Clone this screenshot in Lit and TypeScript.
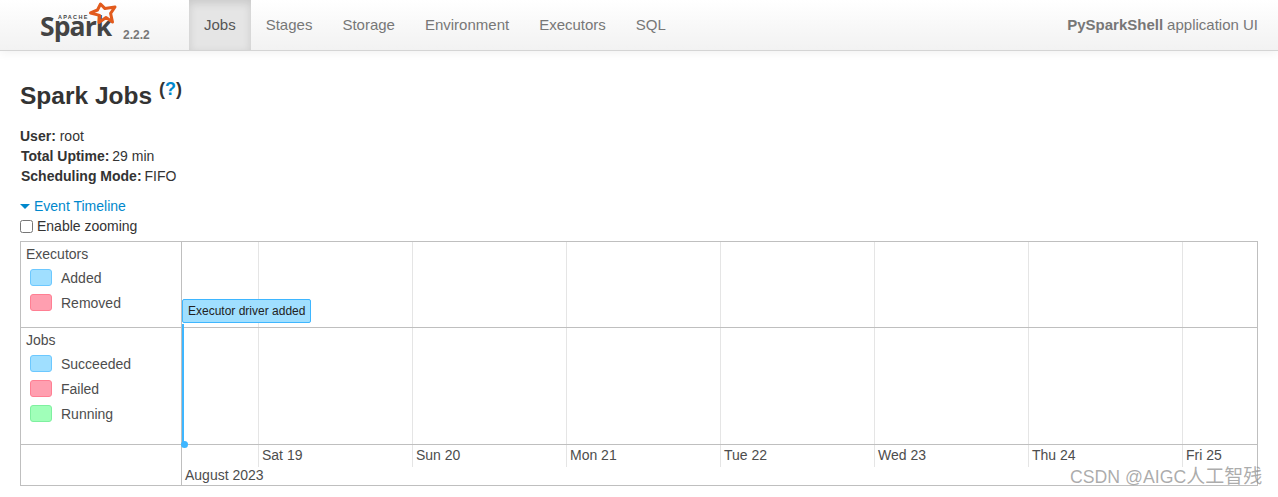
import { LitElement, html, css, svg } from "lit";
import { customElement } from "lit/decorators.js";

const DAYS: [string, number][] = [
  ["Sat 19", 258], ["Sun 20", 412], ["Mon 21", 566], ["Tue 22", 720],
  ["Wed 23", 874], ["Thu 24", 1028], ["Fri 25", 1182],
];
const ORIGIN = 182;

@customElement("app-root")
export class AppRoot extends LitElement {
  static styles = css`
    :host { display: block; width: 1278px; height: 497px; overflow: hidden; position: relative; background: #fff;
      font-family: "Liberation Sans", Arial, sans-serif; font-size: 14px; line-height: 20px; color: #333; }
    .nav { height: 51px; box-sizing: border-box; display: flex; align-items: stretch;
      background: linear-gradient(to bottom, #ffffff, #f2f2f2); border-bottom: 1px solid #d4d4d4;
      box-shadow: 0 1px 10px rgba(0,0,0,.07); }
    .brand { width: 189px; flex: none; position: relative; }
    .star { position: absolute; left: 87px; top: 0; width: 31px; height: 28px; }
    .apache { position: absolute; left: 58px; top: 13px; font-family: "Liberation Sans", sans-serif; font-weight: 700; font-size: 5.5px; line-height: 8px; letter-spacing: 1.3px; color: #444; }
    .spark { position: absolute; left: 40px; top: 20px; font-family: "Open Sans", sans-serif; font-weight: 700; font-size: 26.5px; line-height: 12px; letter-spacing: -.9px; color: #444; }
    .ver { position: absolute; left: 123px; top: 25px; font-size: 12px; line-height: 20px; font-weight: 700; color: #777; }
    .tab { display: flex; align-items: center; padding: 0 15px; font-size: 15px; color: #777; height: 50px; }
    .tab.active { color: #555; background: #e5e5e5; box-shadow: inset 0 3px 8px rgba(0,0,0,.125); }
    .app { margin-left: auto; padding-right: 20px; display: flex; align-items: center; font-size: 15px; color: #777; height: 50px; }
    .app b { margin-right: 4px; }
    .content { padding: 0 20px; }
    h3 { margin: 0; padding-top: 25px; font-size: 24.5px; line-height: 40px; font-weight: 700; color: #333; display: flex; height: 40px; }
    h3 sup { font-size: 18px; line-height: 18px; margin-left: 7px; margin-top: 4px; font-weight: 700; color: #333; }
    h3 sup a { color: #0088cc; }
    .meta { margin-top: 10px; }
    .meta div { height: 20px; }
    .meta div:not(:first-child) { padding-left: 1px; }
    .meta div:not(:first-child) b { margin-right: -1px; }
    .toggle { margin-top: 10px; color: #0088cc; display: flex; align-items: center; height: 20px; }
    .caret { width: 0; height: 0; border-left: 5px solid transparent; border-right: 5px solid transparent; border-top: 5px solid #0088cc; margin-right: 4px; }
    .zoom { display: flex; align-items: center; height: 20px; }
    .zoom input { width: 13px; height: 13px; margin: 1px 4px 0 0; }
    .timeline { margin-top: 5px; width: 1238px; height: 245px; box-sizing: border-box; border: 1px solid #bfbfbf; display: grid;
      grid-template-columns: 161px 1fr; grid-template-rows: 86px 117px 1fr; color: #4d4d4d; }
    .label { padding: 2px 0 0 5px; border-right: 1px solid #bfbfbf; border-bottom: 1px solid #bfbfbf; }
    .group { height: 20px; }
    .legend { display: flex; align-items: center; height: 25px; padding-left: 4px; }
    .group + .legend { margin-top: 1px; }
    .swatch { width: 20px; height: 15px; border-radius: 3px; border: 1px solid; margin-right: 9px; }
    .blue { background: #a0dfff; border-color: #6cc8ff; }
    .red { background: #ff9fb0; border-color: #ff7f93; }
    .green { background: #a0ffb9; border-color: #7ff0a0; }
    .panel { position: relative; border-bottom: 1px solid #bfbfbf; }
    .axis-label { border-right: 1px solid #bfbfbf; }
    .axis { position: relative; }
    .grid { position: absolute; top: 0; bottom: 0; width: 1px; background: #e5e5e5; }
    .tick { position: absolute; top: 0; height: 22px; width: 1px; background: #e5e5e5; }
    .day { position: absolute; top: 0; line-height: 20px; padding-left: 4px; }
    .month { position: absolute; left: 3px; top: 20px; line-height: 20px; }
    .box { position: absolute; left: 0; top: 57px; height: 24px; box-sizing: border-box; padding: 0 5px; display: flex; align-items: center; z-index: 2;
      background: #a0dfff; border: 1px solid #3eb6ff; border-radius: 2px; font-size: 12px; color: #222; white-space: nowrap; }
    .vline { position: absolute; left: 0; width: 2px; background: #3eb6ff; z-index: 2; }
    .dot { position: absolute; left: -1px; top: -4px; width: 7px; height: 7px; border-radius: 50%; background: #3eb6ff; z-index: 3; }
    .mark { position: absolute; left: 1070px; top: 465px; font-family: "Liberation Sans", "Noto Sans CJK SC", sans-serif; font-size: 17.7px; line-height: 24px; color: rgba(140,140,140,.72); white-space: nowrap; pointer-events: none; }
    .mark span { font-size: 19px; }
  `;

  private gridlines() {
    return DAYS.map(([, x]) => html`<div class="grid" style="left:${x - ORIGIN}px"></div>`);
  }

  render() {
    return html`
      <div class="nav">
        <div class="brand">
          <span class="spark">Spark</span>
          <span class="apache">APACHE</span>
          <svg class="star" viewBox="0 0 31 28">
            ${svg`<path d="M13.5 4 L18 8.6 L28 7 L23.6 13.4 L25.5 22 L19 17.5 L12 22.5 L12.6 15.4 L3.5 13 L10.5 10 Z" fill="none" stroke="#e25a1c" stroke-width="3" stroke-linejoin="round"/>`}
          </svg>
          <span class="ver">2.2.2</span>
        </div>
        <div class="tab active">Jobs</div>
        <div class="tab">Stages</div>
        <div class="tab">Storage</div>
        <div class="tab">Environment</div>
        <div class="tab">Executors</div>
        <div class="tab">SQL</div>
        <div class="app"><b>PySparkShell</b> application UI</div>
      </div>
      <div class="content">
        <h3>Spark Jobs <sup>(<a>?</a>)</sup></h3>
        <div class="meta">
          <div><b>User:</b> root</div>
          <div><b>Total Uptime:</b> 29 min</div>
          <div><b>Scheduling Mode:</b> FIFO</div>
        </div>
        <div class="toggle"><span class="caret"></span>Event Timeline</div>
        <div class="zoom"><input type="checkbox" />Enable zooming</div>
        <div class="timeline">
          <div class="label">
            <div class="group">Executors</div>
            <div class="legend"><span class="swatch blue"></span>Added</div>
            <div class="legend"><span class="swatch red"></span>Removed</div>
          </div>
          <div class="panel">
            ${this.gridlines()}
            <div class="box">Executor driver added</div>
          </div>
          <div class="label">
            <div class="group">Jobs</div>
            <div class="legend"><span class="swatch blue"></span>Succeeded</div>
            <div class="legend"><span class="swatch red"></span>Failed</div>
            <div class="legend"><span class="swatch green"></span>Running</div>
          </div>
          <div class="panel">
            ${this.gridlines()}
            <div class="vline" style="top:-4px;bottom:0"></div>
          </div>
          <div class="axis-label"></div>
          <div class="axis">
            <div class="dot"></div>
            ${DAYS.map(([d, x]) => html`<div class="tick" style="left:${x - ORIGIN}px"></div><div class="day" style="left:${x - ORIGIN}px">${d}</div>`)}
            <div class="month">August 2023</div>
          </div>
        </div>
      </div>
      <div class="mark">CSDN @AIGC<span>人工智残</span></div>
    `;
  }
}
